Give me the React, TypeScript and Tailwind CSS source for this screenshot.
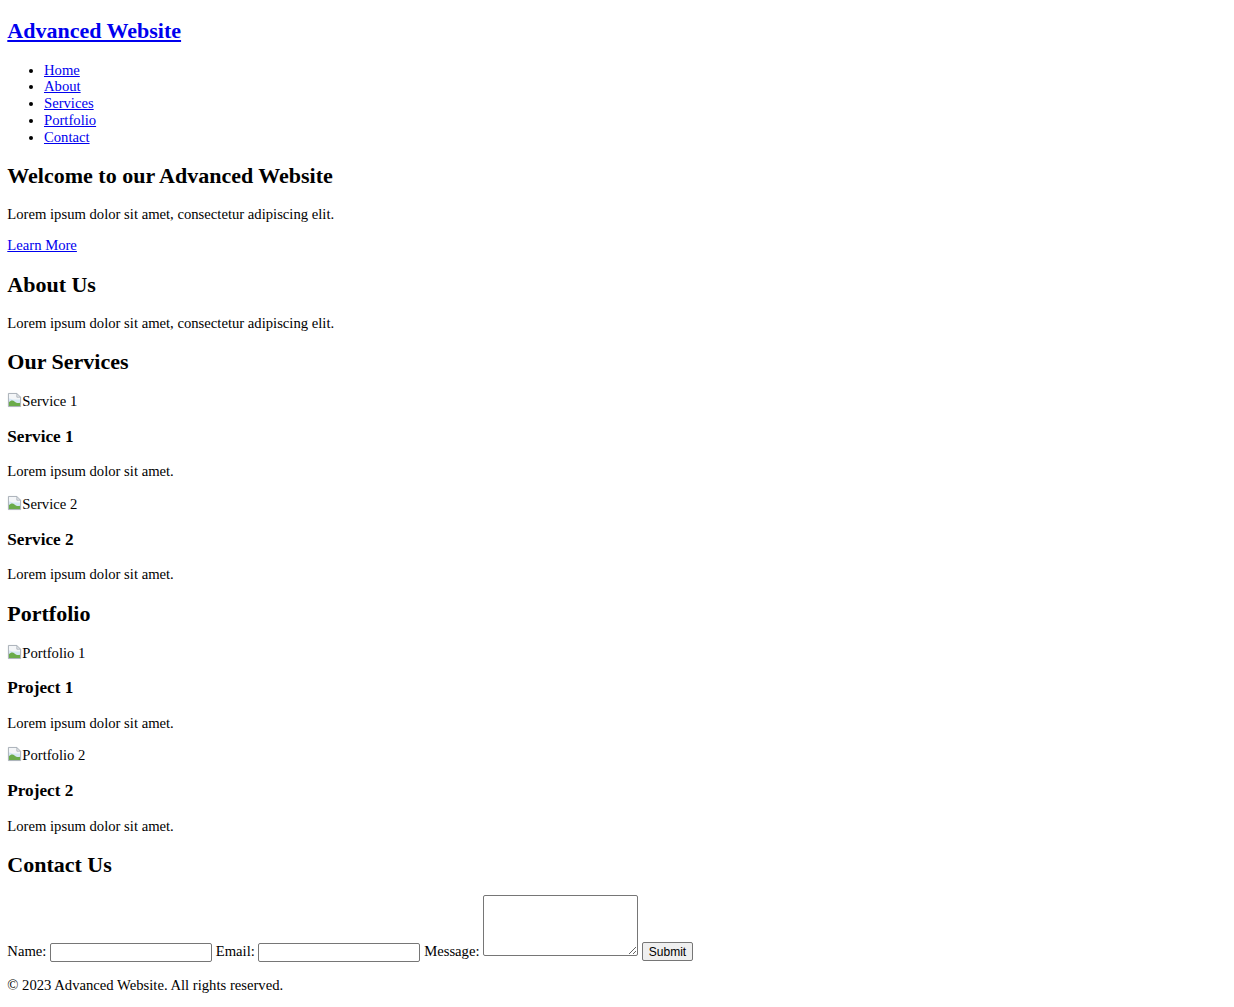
import React from "react";

function BrokenImg({ alt }: { alt: string }) {
  return (
    <span>
      <svg width="15" height="16" viewBox="0 0 16 17" className="inline-block align-[-2px]">
        <path d="M1.5 1.5h9l4 4v10h-13z" fill="#f4f6f8" />
        <path d="M2 15V6.5l4 1.5 8 0v7z" fill="#d6e7f4" />
        <path d="M2 15v-4c2-2 4-2.5 6-1s3 2 6 1.5V15z" fill="#6aab4a" />
        <path d="M10.5 1.5v4h4" fill="#e4e8ec" stroke="#b0b7be" />
        <path d="M1.5 1.5h9l4 4v10h-13z" fill="none" stroke="#a3abb3" />
      </svg>
      {alt}
    </span>
  );
}

function Card({ img, title }: { img: string; title: string }) {
  return (
    <div>
      <BrokenImg alt={img} />
      <h3 className="my-[17px] text-[17.2px] font-bold">{title}</h3>
      <p className="my-[14.67px]">Lorem ipsum dolor sit amet.</p>
    </div>
  );
}

export default function App() {
  const links = ["Home", "About", "Services", "Portfolio", "Contact"];
  const h2 = "my-[17.8px] text-[22px] font-bold";
  const field = "h-[19px] w-[162px] rounded-[2px] border border-[#767676] bg-white px-[2px] align-baseline text-[12px]";

  return (
    <div className="m-[7.3px] font-['Liberation_Serif',serif] text-[14.67px] leading-[1.14] text-black">
      <header>
        <h1 className="my-[18.3px] text-[22px] font-bold">
          <a href="#" className="text-[#0000ee] underline">Advanced Website</a>
        </h1>
        <nav>
          <ul className="mt-[13.7px] mb-[14.67px] list-disc pl-[36.7px]">
            {links.map((l) => (
              <li key={l}>
                <a href="#" className="text-[#0000ee] underline">{l}</a>
              </li>
            ))}
          </ul>
        </nav>
      </header>

      <section>
        <h2 className={h2}>Welcome to our Advanced Website</h2>
        <p className="my-[14.67px]">Lorem ipsum dolor sit amet, consectetur adipiscing elit.</p>
        <p className="my-[14.67px]">
          <a href="#" className="text-[#0000ee] underline">Learn More</a>
        </p>
      </section>

      <section>
        <h2 className={h2}>About Us</h2>
        <p className="my-[14.67px]">Lorem ipsum dolor sit amet, consectetur adipiscing elit.</p>
      </section>

      <section>
        <h2 className={h2}>Our Services</h2>
        <Card img="Service 1" title="Service 1" />
        <Card img="Service 2" title="Service 2" />
      </section>

      <section>
        <h2 className={h2}>Portfolio</h2>
        <Card img="Portfolio 1" title="Project 1" />
        <Card img="Portfolio 2" title="Project 2" />
      </section>

      <section>
        <h2 className={h2}>Contact Us</h2>
        <form>
          <label htmlFor="name">Name:</label>{" "}
          <input id="name" type="text" className={field} />{" "}
          <label htmlFor="email">Email:</label>{" "}
          <input id="email" type="email" className={field} />{" "}
          <label htmlFor="message">Message:</label>{" "}
          <textarea
            id="message"
            className="h-[61px] w-[155px] rounded-[2px] border border-[#767676] bg-white align-baseline"
          />{" "}
          <button
            type="submit"
            className="h-[19px] rounded-[2px] border border-[#767676] bg-[#efefef] px-[6px] align-baseline font-['Liberation_Sans',sans-serif] text-[12px] leading-none"
          >
            Submit
          </button>
        </form>
      </section>

      <footer>
        <p className="my-[14.67px]">© 2023 Advanced Website. All rights reserved.</p>
      </footer>
    </div>
  );
}
